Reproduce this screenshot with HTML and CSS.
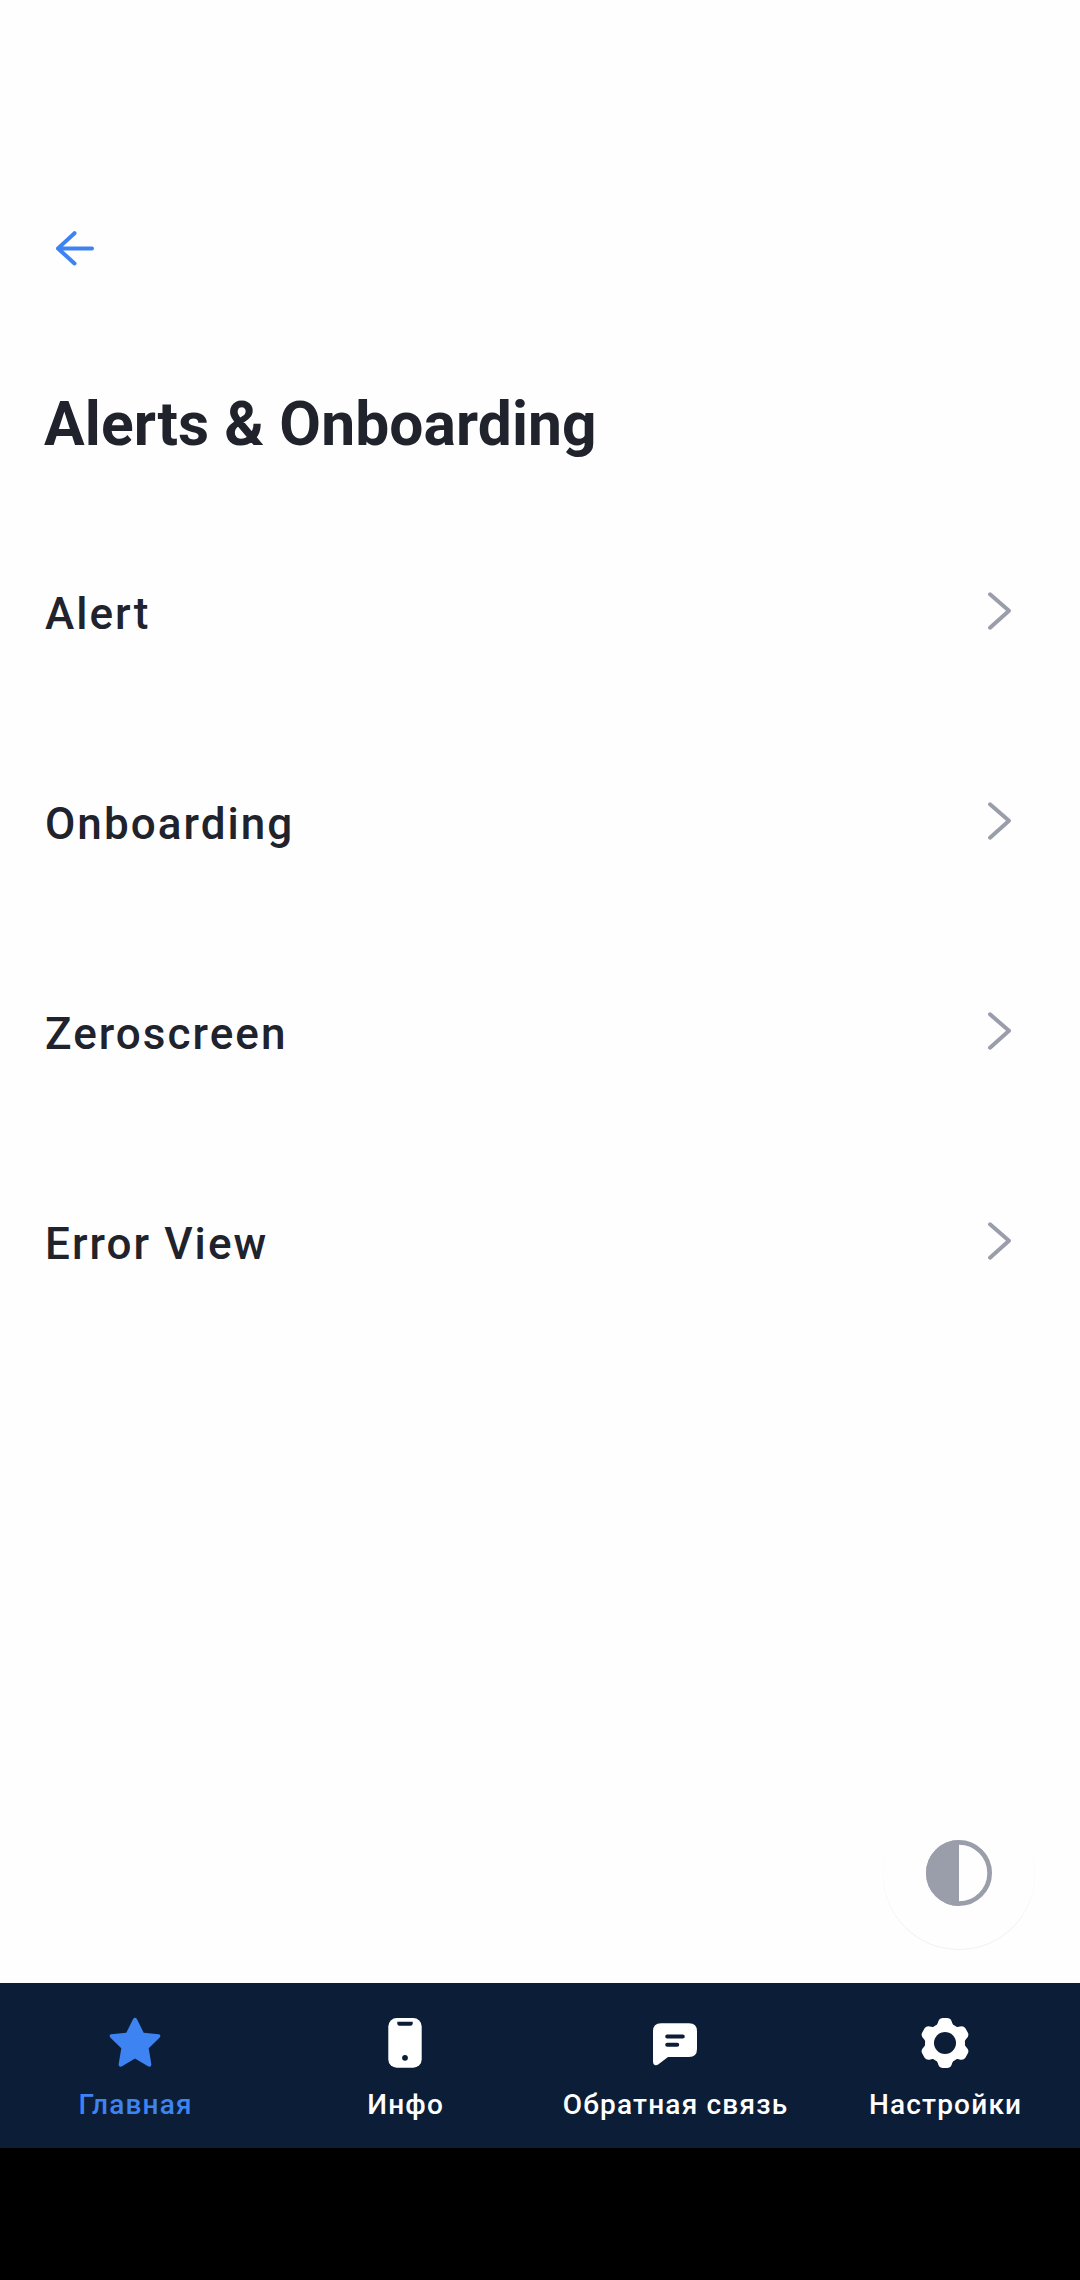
FILE: index.html
```html
<!DOCTYPE html>
<html lang="ru">
<head>
<meta charset="utf-8">
<title>Alerts &amp; Onboarding</title>
<link rel="stylesheet" href="styles.css">
</head>
<body>
<main class="screen">
<header class="topbar"><svg class="back" viewBox="0 0 48 48"><path d="M42 24.400H8M24.500 9.200L8 24.400L24.500 39.500"/></svg></header>
<h1 class="title">Alerts &amp; Onboarding</h1>
<ul class="list">
<li class="row"><span>Alert</span><svg class="chevron" viewBox="0 0 30 42"><path d="M4 4.300L23 20.800L4 37.700"/></svg></li>
<li class="row"><span>Onboarding</span><svg class="chevron" viewBox="0 0 30 42"><path d="M4 4.300L23 20.800L4 37.700"/></svg></li>
<li class="row"><span>Zeroscreen</span><svg class="chevron" viewBox="0 0 30 42"><path d="M4 4.300L23 20.800L4 37.700"/></svg></li>
<li class="row"><span>Error View</span><svg class="chevron" viewBox="0 0 30 42"><path d="M4 4.300L23 20.800L4 37.700"/></svg></li>
</ul>
<button class="theme" aria-label="Theme"><svg viewBox="0 0 66 66"><circle cx="33" cy="33" r="30.650"/><path d="M33 0A33 33 0 0 0 33 66Z"/></svg></button>
</main>
<nav class="tabs">
<a class="tab active"><svg viewBox="0 0 56 56"><path d="M26 4.200Q28 1.300 30 4.200L36.700 17.700L51.700 19.300Q54.500 20 52.700 22.600L41.700 33.300L44.400 49.500Q44 52.700 41 51.300L28 43.500L15 51.300Q12 52.700 11.600 49.500L14.300 33.300L3.300 22.600Q1.500 20 4.300 19.300L19.300 17.700Z"/></svg><span>Главная</span></a>
<a class="tab"><svg viewBox="0 0 56 56"><rect x="11.300" y="3" width="33.400" height="49.700" rx="8.500"/><path class="cut" d="M20.300 6.700H35.700V8.500Q35.700 10.700 33.500 10.700H22.500Q20.300 10.700 20.300 8.500Z"/><circle class="cut" cx="28" cy="42.800" r="2.900"/></svg><span>Инфо</span></a>
<a class="tab"><svg viewBox="0 0 56 56"><path d="M14 8.300H42Q50 8.300 50 16.300V34Q50 42 42 42H21L11.500 49.300Q9.500 50.800 7.700 50Q6 49.200 6 46.500V16.300Q6 8.300 14 8.300Z"/><path class="line" d="M20.200 21.500H35.800M20.200 29.700H30.200"/></svg><span>Обратная связь</span></a>
<a class="tab"><svg viewBox="0 0 56 56"><defs><path id="tooth" d="M28 28L18 10.700Q20.200 10.200 20.800 8Q21.800 3.200 25.500 3H30.500Q34.200 3.200 35.200 8Q35.800 10.200 38 10.700Z"/></defs><circle cx="28" cy="28" r="19.500"/><use href="#tooth"/><use href="#tooth" transform="rotate(60 28 28)"/><use href="#tooth" transform="rotate(120 28 28)"/><use href="#tooth" transform="rotate(180 28 28)"/><use href="#tooth" transform="rotate(240 28 28)"/><use href="#tooth" transform="rotate(300 28 28)"/><circle class="cut" cx="28" cy="28" r="11"/></svg><span>Настройки</span></a>
</nav>
</body>
</html>
```
FILE: styles.css
```css
* { box-sizing: border-box; }
body { margin: 0; height: 2280px; background: #000; font-family: Roboto, sans-serif; color: #20222c; }
.screen { position: relative; height: 1983px; background: #fefefe; padding-top: 224px; }
.topbar { height: 48px; padding-left: 50px; }
.back { display: block; width: 48px; height: 48px; fill: none; stroke: #3d84f2; stroke-width: 4; stroke-linecap: round; stroke-linejoin: round; }
.title { margin: 113px 0 0 44px; font-size: 60.5px; line-height: 80px; font-weight: 700; letter-spacing: 0.11px; }
.list { margin: 44px 0 0; padding: 0; list-style: none; }
.row { display: flex; justify-content: space-between; align-items: center; height: 210px; padding: 0 64px 0 45px; font-size: 44px; font-weight: 500; letter-spacing: 2.05px; }
.chevron { width: 30px; height: 42px; margin-bottom: 6px; fill: none; stroke: #9a9eaa; stroke-width: 4; stroke-linecap: round; stroke-linejoin: round; }
.theme { position: absolute; right: 45px; bottom: 34px; display: flex; align-items: center; justify-content: center; width: 152px; height: 152px; padding: 0; border: 0; border-radius: 50%; background: #fefefe; box-shadow: 0 1px 1px rgba(0, 0, 0, 0.06); }
.theme svg { width: 66px; height: 66px; fill: none; stroke: #9a9eaa; stroke-width: 4.7; }
.theme path { fill: #9a9eaa; stroke: none; }
.tabs { display: grid; grid-template-columns: repeat(4, 1fr); height: 165px; background: #0c1d37; padding-top: 32px; }
.tab { display: flex; flex-direction: column; align-items: center; color: #fff; font-size: 28px; font-weight: 500; letter-spacing: 1.2px; line-height: 36px; gap: 16px; white-space: nowrap; }
.tab span { padding-left: 1.2px; }
.tab svg { width: 56px; height: 56px; fill: currentColor; }
.tab .cut { fill: #0c1d37; }
.tab .line { fill: none; stroke: #0c1d37; stroke-width: 4; stroke-linecap: round; }
.tab.active { color: #3d84f2; }
```
